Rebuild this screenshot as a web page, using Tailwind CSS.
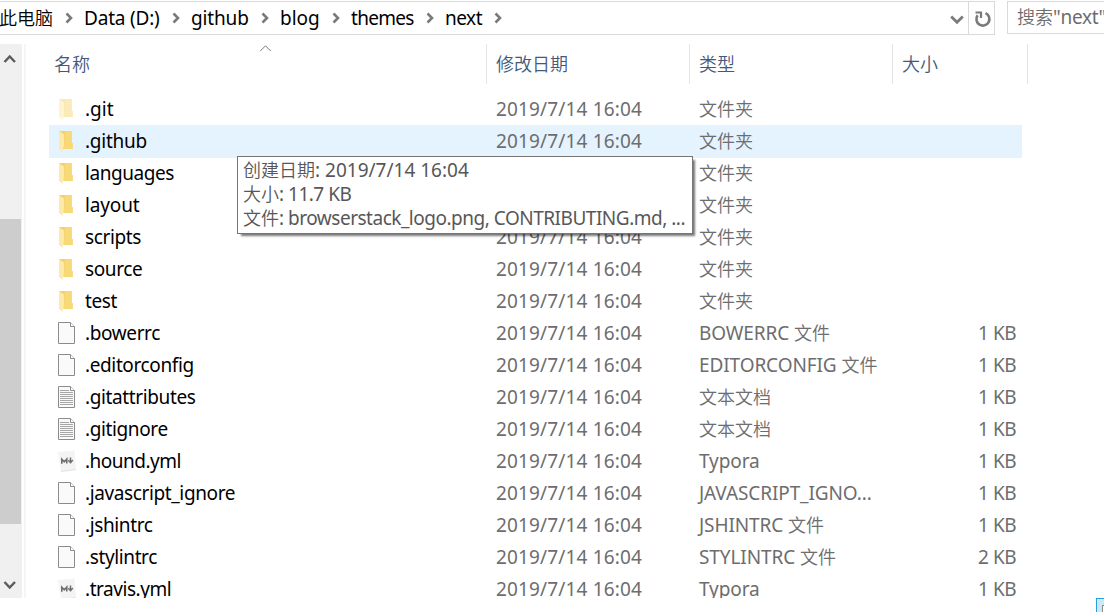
<!DOCTYPE html>
<html lang="zh-CN">
<head>
<meta charset="utf-8">
<title>next</title>
<script src="https://cdn.jsdelivr.net/npm/@tailwindcss/browser@4"></script>
</head>
<body class="h-[612px] w-[1104px] overflow-hidden bg-white font-['Noto_Sans','Noto_Sans_CJK_SC',sans-serif] text-[19px] leading-8 text-[#6d6d6d]">
<svg class="hidden">
  <symbol id="folder" viewBox="0 0 18 24">
    <path d="M1 2h12.700v12h1v6H5.500z" fill="#f5cf68"/>
    <path d="M7 2h6.700v12h1v6H6z" fill="#f8d978"/>
    <path d="M1 2l5 3.500v12.500l-1.300.5V23L1 20z" fill="#ffe9a6"/>
  </symbol>
  <symbol id="file" viewBox="0 0 18 24">
    <path d="M.5 1.500h12l4 4v17H.5z" fill="#f8fafb" stroke="#8c8c8c"/>
    <path d="M12.500 1.500v4h4" fill="#fff" stroke="#8c8c8c"/>
  </symbol>
  <symbol id="text" viewBox="0 0 18 24">
    <path d="M.5 1.500h12l4 4v17H.5z" fill="#fafafa" stroke="#8c8c8c"/>
    <path d="M12.500 1.500v4h4" fill="#fff" stroke="#8c8c8c"/>
    <path d="M2 5.500h9M2 7.500h13M2 9.500h13M2 11.500h13M2 13.500h13M2 15.500h13M2 17.500h13M2 19.500h13" stroke="#a6a6a6" fill="none"/>
  </symbol>
  <symbol id="md" viewBox="0 0 20 24">
    <path d="M0 3l16.500-1.500L18 20.500 3 22.500z" fill="#f4f4f4"/>
    <path d="M3 22.500l15-2" stroke="#e2e2e2" fill="none"/>
    <path d="M3.800 14.800V10.300L6.300 12.800 8.800 10v4.500" stroke="#6e6e6e" stroke-width="1.600" fill="none"/>
    <path d="M12.500 8.500v5M10.300 11.300l2.300 2.400 2.200-2.600" stroke="#6e6e6e" stroke-width="1.500" fill="none"/>
  </symbol>
  <symbol id="crumb" viewBox="0 0 8 12"><path d="M1.500 1.500L6 6l-4.500 4.500" stroke="#7a7a7a" stroke-width="2.600" fill="none"/></symbol>
</svg>

<header class="flex h-11 pt-px text-black">
  <div class="flex h-[34px] w-[995px] shrink-0 border-y border-r border-[#d9d9d9]">
    <nav class="flex w-[947px] shrink-0 items-center whitespace-nowrap leading-8">
      <span class="-ml-px w-[66px] pb-px text-[18px] font-[350]">此电脑</span><svg class="h-3 w-2"><use href="#crumb"/></svg>
      <span class="ml-[11px] w-[88px] -tracking-[0.2px]">Data (D:)</span><svg class="h-3 w-2"><use href="#crumb"/></svg>
      <span class="ml-[11px] w-[70px] -tracking-[0.15px]">github</span><svg class="h-3 w-2"><use href="#crumb"/></svg>
      <span class="ml-[11px] w-[52px]">blog</span><svg class="h-3 w-2"><use href="#crumb"/></svg>
      <span class="ml-[11px] w-[75px] -tracking-[0.7px]">themes</span><svg class="h-3 w-2"><use href="#crumb"/></svg>
      <span class="ml-[11px] w-[49px] -tracking-[0.5px]">next</span><svg class="h-3 w-2"><use href="#crumb"/></svg>
    </nav>
    <svg class="mt-3 ml-[3px] h-[12px] w-[14px] shrink-0" viewBox="0 0 14 12"><path d="M1.200 2.500L7 8.300l5.800-5.800" stroke="#7a7a7a" stroke-width="2.700" fill="none"/></svg>
    <div class="ml-1 flex grow border-l border-[#d9d9d9]">
      <svg class="mt-[8px] ml-[5px] h-[18px] w-[18px] shrink-0" viewBox="0 0 18 18"><path d="M11.500 3.100A6.500 6.500 0 1 1 3.600 5.300" stroke="#7a7a7a" stroke-width="2.600" fill="none"/><path d="M1.500 2.500H7V8" stroke="#7a7a7a" stroke-width="2.200" fill="none"/></svg>
    </div>
  </div>
  <div class="ml-3 h-[33px] grow overflow-hidden border-y border-l border-[#d9d9d9] pl-[9px] leading-[31px] whitespace-nowrap text-[#6d6d6d] -tracking-[0.3px]"><span class="text-[18px] font-[350] tracking-normal">搜索</span>"next"</div>
</header>

<main class="relative flex h-[554px] overflow-hidden">
  <div class="flex w-[22px] shrink-0 flex-col bg-[#f0f0f0]">
    <svg class="mt-[9px] ml-[3px] h-3 w-3.5" viewBox="0 0 14 12"><path d="M1.500 9L6.700 3.500 12 9" stroke="#5c5c5c" stroke-width="2.500" fill="none"/></svg>
    <div class="mt-[154px] h-[305px] w-[21px] bg-[#cdcdcd]"></div>
    <svg class="mt-[56px] ml-[3px] h-3 w-3.5" viewBox="0 0 14 12"><path d="M1.500 2L6.700 7.500 12 2" stroke="#5c5c5c" stroke-width="2.500" fill="none"/></svg>
  </div>
  <div class="ml-[2px] w-[2px] shrink-0 bg-[#f5f5f5]"></div>
  <section class="w-[1002px]">
    <div class="flex h-10 text-[18px] font-[350] leading-10 text-[#43597a]">
      <div class="flex w-[461px] border-r border-[#e5e5e5] pl-7"><span class="w-[205px]">名称</span><svg class="h-2 w-3.5" viewBox="0 0 14 8"><path d="M1.300 7L6.500 1.800 11.700 7" stroke="#777" fill="none"/></svg></div>
      <div class="w-[203px] border-r border-[#e5e5e5] pl-[9px]">修改日期</div>
      <div class="w-[203px] border-r border-[#e5e5e5] pl-[9px]">类型</div>
      <div class="w-[135px] border-r border-[#e5e5e5] pl-[9px]">大小</div>
    </div>
    <div id="rows" class="mt-[9px] ml-[23px] w-[973px]"></div>
  </section>
</main>

<aside class="absolute top-[156px] left-[237px] h-[78px] w-[456px] border border-[#767676] bg-white pt-px pl-[5px] whitespace-nowrap leading-6 text-[#575757] shadow-[3px_3px_2px_-1px_#00000088]">
  <div class="h-6"><span class="text-[18px] font-[350]">创建日期</span>: 2019/7/14 16:04</div>
  <div class="h-6 -tracking-[0.5px]"><span class="text-[18px] font-[350] tracking-normal">大小</span>: 11.7 KB</div>
  <div class="h-6 -tracking-[0.49px]"><span class="text-[18px] font-[350] tracking-normal">文件</span>: browserstack_logo.png, CONTRIBUTING.md, ...</div>
</aside>
<div class="absolute right-0 bottom-0 h-[14px] w-2 overflow-hidden border-t border-l border-[#26a0da] bg-[#cce8f6]"><div class="mt-[6px] ml-[5px] size-3 border border-[#8a8a8a] bg-white"></div></div>

<script>
const W = '文件夹', F = ' 文件';
const files = [
  ['.git', 'folder', W], ['.github', 'folder', W], ['languages', 'folder', W], ['layout', 'folder', W],
  ['scripts', 'folder', W], ['source', 'folder', W], ['test', 'folder', W],
  ['.bowerrc', 'file', 'BOWERRC' + F, 1], ['.editorconfig', 'file', 'EDITORCONFIG' + F, 1],
  ['.gitattributes', 'text', '文本文档', 1], ['.gitignore', 'text', '文本文档', 1],
  ['.hound.yml', 'md', 'Typora', 1], ['.javascript_ignore', 'file', 'JAVASCRIPT_IGNO...', 1],
  ['.jshintrc', 'file', 'JSHINTRC' + F, 1], ['.stylintrc', 'file', 'STYLINTRC' + F, 2], ['.travis.yml', 'md', 'Typora', 1],
];
const cjk = s => s.replace(/[\u4e00-\u9fff]+/g, '<span class="text-[18px] font-[350] tracking-normal">$&</span>');
const tight = { '.git': 0, layout: -.15, '.github': -.25, languages: -.44, '.hound.yml': -.5, '.travis.yml': -.45 };
document.getElementById('rows').innerHTML = files.map(([name, icon, type, kb], i) => `
  <div class="flex whitespace-nowrap ${i === 1 ? 'h-[33px] -mb-px bg-[#e5f3ff]' : 'h-8'}">
    <svg class="mt-1 ml-[9px] h-6 shrink-0 ${icon === 'md' ? 'w-5 -mr-0.5' : 'w-[18px]'} ${i === 0 ? 'opacity-50' : ''}"><use href="#${icon}"/></svg>
    <span class="ml-[9px] w-[411px] text-black" style="letter-spacing:${tight[name] ?? -.38}px">${name}</span>
    <span class="w-[203px] tracking-[0.15px]">2019/7/14 16:04</span>
    <span class="w-[203px] -tracking-[0.1px]">${cjk(type)}</span>
    <span class="w-[114px] -tracking-[0.5px] text-right">${kb ? kb + ' KB' : ''}</span>
  </div>`).join('');
</script>
</body>
</html>
